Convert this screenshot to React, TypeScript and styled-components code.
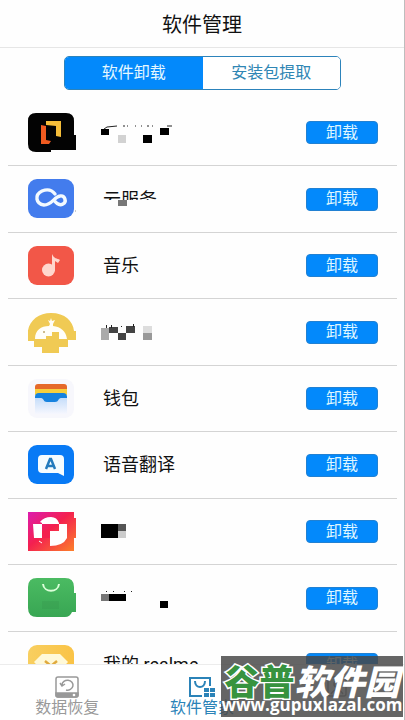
import React from 'react';
import styled, { createGlobalStyle, css } from 'styled-components';

const blue = '#0389fb';
const Global = createGlobalStyle`
  *{box-sizing:border-box;}
  body{margin:0;background:#fff;}
  body,button{font-family:Roboto,"Noto Sans CJK SC",sans-serif;}
`;
const Page = styled.div`
  height:100vh;display:flex;flex-direction:column;overflow:hidden;
  background:#fefefe;border-right:1px solid #bdbdbd;position:relative;
`;
const Header = styled.header`
  flex:none;height:48px;padding-top:2px;display:flex;align-items:center;justify-content:center;
  border-bottom:1px solid #e6e6e6;
`;
const Title = styled.h1`
  margin:0;font-size:20px;line-height:24px;font-weight:400;color:#111;
`;
const Tabs = styled.div`
  flex:none;display:flex;height:34px;margin:8px 63px 10px 64px;
  border:1px solid #2c83bb;border-radius:5px;overflow:hidden;
`;
const Tab = styled.button<{ $active?: boolean }>`
  flex:1;border:0;padding:0;font-size:16px;line-height:20px;
  background:${p => (p.$active ? blue : '#fff')};
  color:${p => (p.$active ? '#e6f8ff' : '#2f86b4')};
`;
const List = styled.ul`
  flex:1;min-height:0;margin:0;padding:0 7px 0 8px;list-style:none;overflow:hidden;
`;
const Row = styled.li`
  height:66px;display:flex;align-items:center;padding:0 19px 0 20px;
  border-bottom:1px solid #d4d4d4;
  &:nth-child(even){height:67px;}
`;
const AppIcon = styled.svg`
  flex:none;width:49px;height:42px;margin-right:24px;
`;
const Name = styled.span<{ $cut?: boolean }>`
  flex:1;min-width:0;font-size:18px;line-height:24px;color:#111;white-space:nowrap;
  ${p => p.$cut && css`height:12px;margin-top:-10px;overflow:hidden;`}
`;
const NameBox = styled.div`
  flex:1;min-width:0;display:flex;align-items:center;padding-left:2px;position:relative;
`;
const Mosaic = styled.svg`
  position:absolute;left:0;top:50%;margin-top:-12px;width:80px;height:24px;
`;
const Uninstall = styled.button`
  flex:none;width:72px;height:23px;padding:0;border:1px solid #2181d3;border-radius:4px;
  background:${blue};color:#dff6ff;font-size:16px;line-height:20px;
`;
const Nav = styled.nav`
  flex:none;height:56px;display:flex;background:#fff;border-top:1px solid #ececec;
`;
const NavItem = styled.button<{ $active?: boolean }>`
  flex:1;border:0;padding:11px 0 0;background:none;display:flex;flex-direction:column;
  align-items:center;justify-content:flex-start;font-size:16px;line-height:20px;
  color:${p => (p.$active ? '#2b83b8' : '#999')};
  svg{width:28px;height:22px;}
`;
const Watermark = styled.div`
  position:absolute;right:1px;bottom:3px;width:182px;height:61px;padding-top:9px;
  background:rgba(72,72,72,.84);color:#fff;overflow:hidden;pointer-events:none;
`;
const Brand = styled.div`
  display:flex;justify-content:center;font-size:35px;line-height:30px;font-weight:900;
  font-family:"Noto Sans CJK SC",sans-serif;
`;
const Green = styled.span`
  color:#37933f;-webkit-text-stroke:3px #fff;paint-order:stroke fill;
`;
const White = styled.span`
  font-style:italic;
`;
const Site = styled.div`
  font:700 17px/20px "Open Sans",sans-serif;text-align:center;white-space:nowrap;
`;

const squares = (items: [number, number, number, number, string][]) =>
  items.map(([x, y, w, h, c], i) => <rect key={i} x={x} y={y} width={w} height={h} fill={c} />);

type Item = { id: string; name?: string; cut?: boolean; icon: React.ReactNode; mosaic?: React.ReactNode };

const apps: Item[] = [
  {
    id: 'lens',
    icon: <>
      <path d="M8 2h30q8 0 8 8v14h2v15H23v2H8q-8 0-8-8V10q0-8 8-8Z" fill="#030303" />
      <path d="M13 14l5 1v14l5 1-2 3h-8Z" fill="#f05b20" /><path d="M18 10h15v16l-5-1V15l-10-1Z" fill="#f4bd39" />
    </>,
    mosaic: <>
      {squares([[0, 8, 8, 6, '#000'], [17, 14, 8, 8, '#d2d2d2'], [42, 14, 9, 8, '#000'], [59, 7, 9, 7, '#000']])}
      <path d="M3 8l3-2 10-1M22 5h2m2 0h1m7 0h1m5 0h1m5 0h2m3 0h1m14 0h5" stroke="#222" fill="none" />
    </>,
  },
  {
    id: 'cloud', name: '云服务', cut: true,
    icon: <>
      <rect y="2" width="46" height="39" rx="9" fill="#437ced" />
      <path d="M27 17c-3-4-8-5-13-3-8 4-6 13 2 14 8 0 10-8 16-9 5-1 7 6 3 8-4 2-7-1-9-4" fill="none" stroke="#f3faff" strokeWidth="3.4" strokeLinecap="round" />
      <path d="M47 34h1" stroke="#999" />
    </>,
    mosaic: <rect x="17" y="13" width="9" height="6" fill="#777" />,
  },
  {
    id: 'music', name: '音乐',
    icon: <>
      <rect y="2" width="46" height="39" rx="9" fill="#f25748" />
      <circle cx="20.5" cy="26" r="6.5" fill="#ffd7ce" /><path d="M24 26V10c2 5 5 4 8 6l-2 3-3-2v10" fill="#ffd7ce" />
    </>,
  },
  {
    id: 'bell',
    icon: <>
      <path d="M0 27C-2 13 9 3 23 3s22 8 23 18h2v9h-8v7h-9v6H14v-6H6v-6H0Z" fill="#f0ca54" />
      <path d="M7 29c0-9 6-13 14-13l1-2-2-4 2 1 1-3 1 3 3-1-2 4v2c8 1 13 5 14 13h-8v-7h-7v4h-6v3Z" fill="#fffef8" /><circle cx="16" cy="22" r="1" fill="#bda66b" />
    </>,
    mosaic: squares([[0, 8, 8, 12, '#aaa'], [8, 7, 9, 6, '#444'], [17, 13, 8, 7, '#444'], [25, 6, 9, 7, '#444'], [42, 6, 9, 7, '#ddd'], [42, 13, 9, 7, '#999'], [5, 5, 1, 3, '#222'], [10, 5, 1, 3, '#222'], [20, 6, 1, 1, '#222'], [32, 4, 1, 3, '#222']]),
  },
  {
    id: 'wallet', name: '钱包',
    icon: <>
      <defs><linearGradient id="wallet-fill" x1="0" x2="0" y1="0" y2="1"><stop stopColor="#c5ddfa" /><stop offset="1" stopColor="#f6f7fe" /></linearGradient></defs>
      <rect y="2" width="46" height="39" rx="9" fill="#f7f7fc" />
      <path d="M7 13v-3q0-3 3-3h26q3 0 3 3v3Z" fill="#e5692a" /><path d="M7 12h32v6H7Z" fill="#f7cf3d" />
      <path d="M7 20q0-4 4-4h24q4 0 4 4v5H7Z" fill="#1682df" />
      <path d="M7 21h6c3 0 2 4 6 4h8c4 0 3-4 6-4h6v16H7Z" fill="url(#wallet-fill)" />
    </>,
  },
  {
    id: 'translate', name: '语音翻译',
    icon: <>
      <rect y="2" width="46" height="39" rx="9" fill="#087af5" />
      <path d="M14 12h18q4 0 4 4v17l-6-3H14q-4 0-4-4V16q0-4 4-4Z" fill="#f5fcff" />
      <path d="M18 26l4-10h1l4 10M20 23h6" fill="none" stroke="#247bbd" strokeWidth="2.5" />
    </>,
  },
  {
    id: 'video',
    icon: <>
      <defs><linearGradient id="video-fill" x1="0" y1="0" x2="1" y2="1"><stop stopColor="#dc1cb0" /><stop offset=".45" stopColor="#f4204f" /><stop offset="1" stopColor="#fc8429" /></linearGradient></defs>
      <path d="M0 2h46v6h2v20h-2v13H0Z" fill="url(#video-fill)" />
      <path d="M5 14h9v14H6ZM12 12q4-5 11-5 6 0 8 6v1H14v-1ZM31 14h8v14q-4 8-17 8V21h9Z" fill="#fff" />
      <path d="M14 21h8v7h-8Z" fill="#f4204f" />
      <path d="M11 31l3 2" stroke="#fff" />
    </>,
    mosaic: squares([[0, 4, 17, 14, '#000'], [17, 4, 8, 7, '#555'], [17, 11, 8, 7, '#ccc']]),
  },
  {
    id: 'store',
    icon: <>
      <defs><linearGradient id="store-fill" x1="0" x2="0" y1="0" y2="1"><stop stopColor="#4bbb62" /><stop offset="1" stopColor="#38a653" /></linearGradient></defs>
      <path d="M9 2h28q9 0 9 9v6h2v19h-4q-2 5-7 5H9q-9 0-9-9V11q0-9 9-9Z" fill="url(#store-fill)" />
      <path d="M15 8c1 9 15 9 16 0" fill="none" stroke="#dcffd9" strokeWidth="2" />
      <path d="M14 25h17v8H14Z" fill="#34944c" opacity=".3" />
    </>,
    mosaic: squares([[0, 8, 8, 7, '#777'], [8, 8, 17, 7, '#000'], [59, 15, 8, 7, '#000'], [5, 5, 1, 1, '#222'], [12, 5, 1, 1, '#222'], [23, 5, 1, 1, '#222'], [30, 5, 1, 1, '#222']]),
  },
  {
    id: 'realme', name: '我的 realme',
    icon: <>
      <defs><linearGradient id="realme-fill"><stop stopColor="#f8cf60" /><stop offset="1" stopColor="#fac346" /></linearGradient></defs>
      <rect y="2" width="46" height="39" rx="9" fill="url(#realme-fill)" />
      <path d="M14 11h18l8 8-17 18L6 19Z" fill="#fff9d8" /><path d="M17 18l6 5 6-5" fill="none" stroke="#e0aa3d" strokeWidth="2.5" />
    </>,
  },
];

export default function App() {
  return (
    <>
      <Global />
      <Page>
        <Header><Title>软件管理</Title></Header>
        <Tabs><Tab $active>软件卸载</Tab><Tab>安装包提取</Tab></Tabs>
        <List>
          {apps.map(a => (
            <Row key={a.id}>
              <AppIcon viewBox="0 1 49 42" aria-hidden="true">{a.icon}</AppIcon>
              <NameBox>
                <Name $cut={a.cut}>{a.name}</Name>
                {a.mosaic && <Mosaic viewBox="0 0 80 24" aria-hidden="true">{a.mosaic}</Mosaic>}
              </NameBox>
              <Uninstall>卸载</Uninstall>
            </Row>
          ))}
        </List>
        <Nav>
          <NavItem>
            <svg viewBox="0 0 28 22" fill="none" stroke="currentColor" strokeWidth="1.5">
              <rect x="3" y="1" width="22" height="20" rx="2" /><path d="M3 17h22v2q0 2-2 2H5q-2 0-2-2Z" fill="currentColor" />
              <path d="M9 9a5.5 5 0 1 1 4 5M7 7l2 3 3-2" /><circle cx="21" cy="19" r=".6" stroke="#fff" />
            </svg>
            数据恢复
          </NavItem>
          <NavItem $active>
            <svg viewBox="0 0 28 22" fill="none" stroke="currentColor" strokeWidth="2">
              <path d="M14 20H2V2h20v8" /><path d="M7 5c0 8 10 8 10 0" />
              <path d="M16 12h5v4h-5zM22 12h5v4h-5zM16 17h5v4h-5zM22 17h5v4h-5z" fill="currentColor" stroke="none" />
            </svg>
            软件管家
          </NavItem>
          <NavItem>
            <svg viewBox="0 0 28 22" fill="none" stroke="currentColor" strokeWidth="1.5">
              <rect x="5" y="1" width="18" height="19" rx="2" /><circle cx="14" cy="8" r="3" /><path d="M8 18q6-9 12 0" />
            </svg>
          </NavItem>
        </Nav>
        <Watermark>
          <Brand><Green>谷普</Green><White>软件园</White></Brand>
          <Site>www.gupuxlazal.com</Site>
        </Watermark>
      </Page>
    </>
  );
}
